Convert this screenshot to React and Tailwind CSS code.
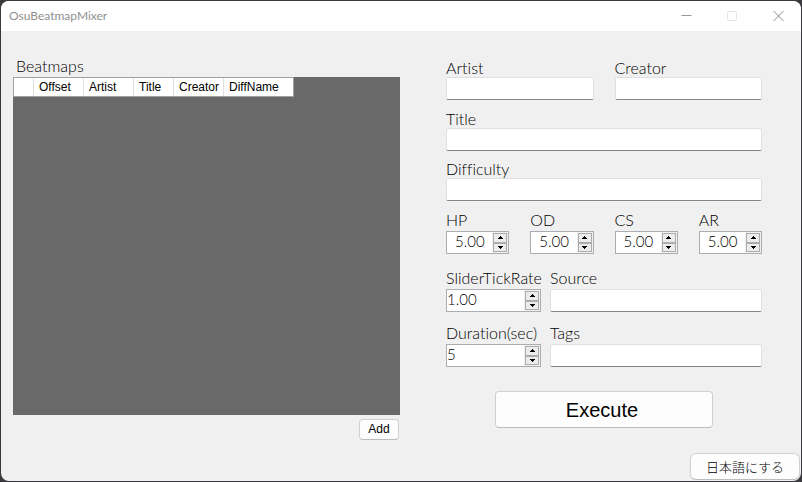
import { useState } from "react";

const LABEL = "block h-[17px] leading-[15px] whitespace-nowrap";

function Field({ id, label, spaced }) {
  return (
    <div className="min-w-0">
      <label htmlFor={id} className={spaced ? `${LABEL} mb-0.5` : LABEL}>
        {label}
      </label>
      <input
        id={id}
        type="text"
        className="block h-[23px] w-full rounded-xs border border-[#e0e0e0] border-b-[#868686] bg-white px-1 outline-none"
      />
    </div>
  );
}

function Spinner({ id, label, initial, digits = 2, step = 1, inset }) {
  const [value, setValue] = useState(initial.toFixed(digits));
  const change = (delta) =>
    setValue((v) => Math.max(0, (Number(v) || 0) + delta).toFixed(digits));
  const arrow =
    "flex flex-1 items-center justify-center border border-[#acacac] bg-[#ececec]";
  return (
    <div className="min-w-0">
      <label htmlFor={id} className={`${LABEL} mb-0.5`}>
        {label}
      </label>
      <div className="flex h-[23px] border border-[#abadb3] bg-white">
        <input
          id={id}
          type="text"
          inputMode="decimal"
          value={value}
          onChange={(e) => setValue(e.target.value)}
          className={`h-[19px] w-0 min-w-0 flex-1 text-[15px] outline-none ${inset ? "pl-2" : ""}`}
        />
        <div className="flex w-4 shrink-0 flex-col bg-[#f0f0f0] p-px">
          <button
            type="button"
            aria-label={`Increase ${label}`}
            onClick={() => change(step)}
            className={arrow}
          >
            <svg width="5" height="3" viewBox="0 0 5 3" shapeRendering="crispEdges">
              <path d="M2 0h1v1h1v1h1v1H0V2h1V1h1z" />
            </svg>
          </button>
          <button
            type="button"
            aria-label={`Decrease ${label}`}
            onClick={() => change(-step)}
            className={arrow}
          >
            <svg width="5" height="3" viewBox="0 0 5 3" shapeRendering="crispEdges">
              <path d="M0 0h5v1H4v1H3v1H2V2H1V1H0z" />
            </svg>
          </button>
        </div>
      </div>
    </div>
  );
}

function TitleBar() {
  const control = "flex w-[46px] items-center justify-center";
  return (
    <header className="flex h-[30px] items-stretch bg-white">
      <h1 className="flex-1 pl-2 text-[12px] leading-[30px] font-normal text-[#909090]">
        OsuBeatmapMixer
      </h1>
      <button type="button" aria-label="Minimize" className={control}>
        <svg width="11" height="11" viewBox="0 0 11 11" fill="none" stroke="#999">
          <path d="M0.5 4.5h10" />
        </svg>
      </button>
      <button type="button" aria-label="Maximize" disabled className={control}>
        <svg width="11" height="11" viewBox="0 0 11 11" fill="none" stroke="#e4e4e4">
          <rect x="0.5" y="0.5" width="9" height="9" rx="1" />
        </svg>
      </button>
      <button type="button" aria-label="Close" className={control}>
        <svg width="11" height="11" viewBox="0 0 11 11" fill="none" stroke="#8c8c8c">
          <path d="M0.5 0l10 10M10.5 0l-10 10" />
        </svg>
      </button>
    </header>
  );
}

const COLUMNS = [
  { name: "Offset", width: "w-[50px]" },
  { name: "Artist", width: "w-[50px]" },
  { name: "Title", width: "w-[40px]" },
  { name: "Creator", width: "w-[50px]" },
  { name: "DiffName", width: "w-[69px]" },
];

const BUTTON = "border border-[#d0d0d0] border-b-[#bcbcbc] bg-[#fdfdfd]";

export default function App() {
  return (
    <div className="flex min-h-screen flex-col bg-[#3a3a3c] p-px font-['Lato','Noto_Sans_CJK_JP',sans-serif] text-[16px] font-light text-black [font-variant-ligatures:none]">
      <div className="flex flex-1 flex-col overflow-hidden rounded-lg bg-[#f0f0f0]">
        <TitleBar />
        <main className="flex flex-1 gap-[46px] pt-[27px] pr-[39px] pl-3">
          <section className="flex flex-[387] flex-col">
            <h2 className={`${LABEL} mb-0.5 pl-[3px]`}>Beatmaps</h2>
            <div className="flex-1 bg-[#696969]">
              <table className="w-[281px] table-fixed border-separate border-spacing-0 border border-[#a0a0a0] bg-white font-['Liberation_Sans',sans-serif] text-[12px]">
                <thead>
                  <tr className="h-[18px]">
                    <td className="w-[20px] border-r border-[#e0e0e0] p-0" />
                    {COLUMNS.map((c) => (
                      <th
                        key={c.name}
                        scope="col"
                        className={`${c.width} border-r border-[#e0e0e0] p-0 pl-[5px] text-left leading-[18px] font-normal last:border-r-0`}
                      >
                        {c.name}
                      </th>
                    ))}
                  </tr>
                </thead>
              </table>
            </div>
            <button
              type="button"
              className={`${BUTTON} mt-1 mr-px h-[21px] w-10 self-end rounded font-['Liberation_Sans',sans-serif] text-[12px] leading-[19px]`}
            >
              Add
            </button>
          </section>

          <form className="flex flex-[316] flex-col pt-0.5" onSubmit={(e) => e.preventDefault()}>
            <div className="mb-[11px] grid grid-cols-2 gap-[21px]">
              <Field id="artist" label="Artist" />
              <Field id="creator" label="Creator" />
            </div>
            <div className="mb-2.5">
              <Field id="title" label="Title" />
            </div>
            <div className="mb-[11px]">
              <Field id="difficulty" label="Difficulty" />
            </div>
            <div className="mb-4 grid grid-cols-4 gap-[21px]">
              <Spinner id="hp" label="HP" initial={5} step={0.1} inset />
              <Spinner id="od" label="OD" initial={5} step={0.1} inset />
              <Spinner id="cs" label="CS" initial={5} step={0.1} inset />
              <Spinner id="ar" label="AR" initial={5} step={0.1} inset />
            </div>
            <div className="mb-[13px] grid grid-cols-[95px_1fr] gap-[9px]">
              <Spinner id="tick" label="SliderTickRate" initial={1} />
              <Field id="source" label="Source" spaced />
            </div>
            <div className="mb-6 grid grid-cols-[95px_1fr] gap-[9px]">
              <Spinner id="duration" label="Duration(sec)" initial={5} digits={0} />
              <Field id="tags" label="Tags" spaced />
            </div>
            <button
              type="submit"
              className={`${BUTTON} h-[37px] w-[218px] self-center rounded pr-1 font-['Liberation_Sans',sans-serif] text-[20px] leading-[34px]`}
            >
              Execute
            </button>
          </form>
        </main>
        <footer className="mt-[13px] flex justify-end pr-px pb-px">
          <button
            type="button"
            lang="ja"
            className={`${BUTTON} h-[27px] w-[110px] rounded-md font-['Noto_Sans_CJK_JP',sans-serif] text-[13px] leading-[25px]`}
          >
            日本語にする
          </button>
        </footer>
      </div>
    </div>
  );
}
